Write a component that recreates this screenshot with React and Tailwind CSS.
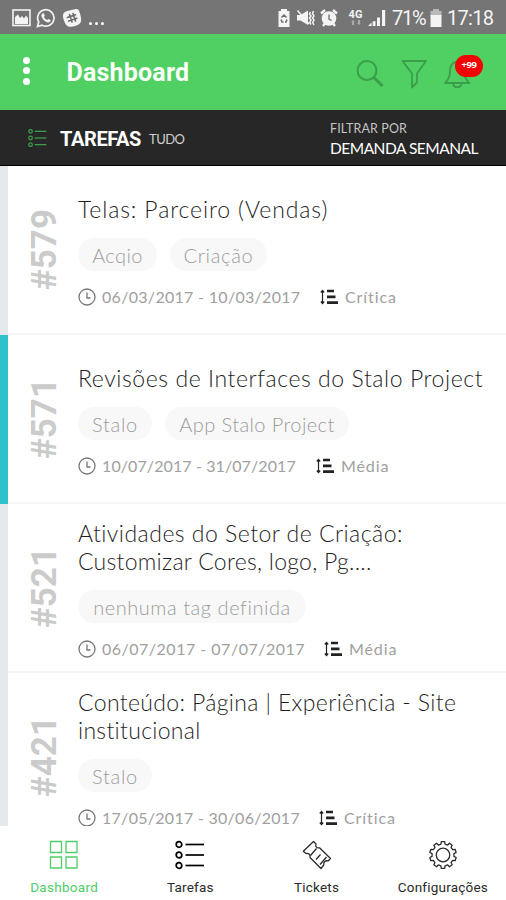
import React from "react";

const tasks = [
  {
    id: "#579",
    strip: "bg-[#e4e7eb]",
    lines: [{ text: "Telas: Parceiro (Vendas)", cls: "tracking-[0.88px]" }],
    tags: [{ text: "Acqio", cls: "w-[79px] tracking-[0.4px]" }, { text: "Criação", cls: "w-[97px] tracking-[0.7px]" }],
    date: "06/03/2017 - 10/03/2017",
    dateCls: "w-[199px] tracking-[0.3px]",
    priority: "Crítica",
  },
  {
    id: "#571",
    strip: "bg-[#2dc2cb]",
    lines: [{ text: "Revisões de Interfaces do Stalo Project", cls: "tracking-[0.57px]" }],
    tags: [{ text: "Stalo", cls: "w-[74px] tracking-[0.7px]" }, { text: "App Stalo Project", cls: "w-[184px] tracking-[0.4px]" }],
    date: "10/07/2017 - 31/07/2017",
    dateCls: "w-[195px] tracking-[0.1px]",
    priority: "Média",
  },
  {
    id: "#521",
    strip: "bg-[#e3e8ea]",
    lines: [
      { text: "Atividades do Setor de Criação:", cls: "tracking-[0.48px]" },
      { text: "Customizar Cores, logo, Pg....", cls: "tracking-[0.27px]" },
    ],
    tags: [{ text: "nenhuma tag definida", cls: "w-[228px] tracking-[0.55px]" }],
    date: "06/07/2017 - 07/07/2017",
    dateCls: "w-[203px] tracking-[0.5px]",
    priority: "Média",
  },
  {
    id: "#421",
    strip: "bg-[#e3e8ea]",
    lines: [
      { text: "Conteúdo: Página | Experiência - Site", cls: "tracking-[0.36px]" },
      { text: "institucional", cls: "tracking-[0.3px]" },
    ],
    tags: [{ text: "Stalo", cls: "w-[74px] tracking-[0.7px]" }],
    date: "17/05/2017 - 30/06/2017",
    dateCls: "w-[198px] tracking-[0.28px]",
    priority: "Crítica",
  },
];

function ListIcon({ className, stroke = 1.5 }) {
  return (
    <svg viewBox="0 0 30 28" className={className} fill="none" stroke="currentColor" strokeWidth={stroke}>
      {[3.5, 14, 24.5].map((y) => (
        <g key={y}>
          <circle cx="4" cy={y} r="2.8" />
          <path d={`M10.5 ${y}H29`} />
        </g>
      ))}
    </svg>
  );
}

function StatusBar() {
  return (
    <div className="flex h-[34px] shrink-0 items-center bg-[#757575] pl-[12px] pr-[12px] pt-px text-[#f4f4f4]">
      <svg viewBox="0 0 19 18" className="h-[18px] w-[19px]">
        <rect x="1" y="1" width="17" height="15.500" fill="none" stroke="currentColor" strokeWidth="1.600" />
        <path d="M3 15V8L6 5.500L8 9L10 7L12 9.500L14 6.500L16 9V15Z" fill="currentColor" />
      </svg>
      <svg viewBox="0 0 20 20" className="ml-[5px] h-[20px] w-[20px]" fill="none" stroke="currentColor" strokeWidth="1.700">
        <path d="M1.500 18.500L2.700 14A8.200 8.200 0 1 1 6 17.200Z" />
        <path d="M6.300 5.600L7.800 5.300L8.800 7.800L7.900 9C8.700 10.500 9.700 11.400 11.200 12.100L12.400 11L14.700 12.100C14.800 14 13 14.700 11.700 14.400C8.500 13.600 6.200 11 5.500 8.300C5.300 7.200 5.600 6.200 6.300 5.600Z" fill="currentColor" stroke="none" />
      </svg>
      <svg viewBox="0 0 20 20" className="ml-[6px] h-[20px] w-[20px]">
        <path d="M12.300 1.500C16.200 .3 17 2 18.200 6.300C19.500 11 19.800 14.500 17 16.300C14.500 17.800 9.500 19.500 6.500 18.500C3.500 17.500 2 13.500 1.200 9.800C.6 6 1.500 4.500 4.500 3.300C7 2.300 9.500 2 12.300 1.500Z" fill="currentColor" />
        <path d="M7.500 6.500L10 14M11 5.500L13.500 13M5.300 9.500L13.500 6.700M6.500 13L14.800 10.200" stroke="#6a6a6a" strokeWidth="1.600" strokeLinecap="round" />
      </svg>
      <div className="ml-[7px] flex items-center gap-[3px] pt-[12px]">
        <i className="h-[2.500px] w-[3px] rounded-full bg-white" />
        <i className="h-[2.500px] w-[3px] rounded-full bg-white" />
        <i className="h-[2.500px] w-[3px] rounded-full bg-white" />
      </div>
      <svg viewBox="0 0 14 18" className="ml-auto h-[18px] w-[14px]">
        <path d="M4 0H10V2H12.500V18H1.500V2H4Z" fill="currentColor" />
        <path d="M4.500 8.500L7 6L9.500 8.500M4 10.500L5 13H6.500M10 10.500L9 13H8" stroke="#6b6b6b" fill="none" strokeWidth="1.500" />
      </svg>
      <svg viewBox="0 0 20 18" className="ml-[5px] h-[18px] w-[20px]">
        <path d="M1 6H4.500L12 1.500V16L4.500 11.500H1Z" fill="currentColor" />
        <path d="M1.500 1.500L13 15" stroke="currentColor" strokeWidth="1.500" />
        <path d="M14.500 3L13.500 5L15 7L13.500 9L15 11L13.700 13.500L15 15.500M17.500 2L16.500 4.500L18 7L16.500 9L18 11L16.700 13.500L18 16" stroke="currentColor" strokeWidth="1.500" fill="none" />
      </svg>
      <svg viewBox="0 0 18 18" className="ml-[4px] h-[18px] w-[18px]">
        <circle cx="9" cy="9.500" r="7.300" fill="currentColor" />
        <path d="M1 4.500L5 1M17 4.500L13 1M3 17L5 14.500M15 17L13 14.500" stroke="currentColor" strokeWidth="2.400" />
        <path d="M9 5.500V10L11.500 11.500" stroke="#777" strokeWidth="1.400" fill="none" />
      </svg>
      <div className="ml-[10px] flex w-[15px] flex-col items-center pb-[2px]">
        <span className="font-[Roboto,sans-serif] text-[11px] font-bold leading-[11px]">4G</span>
        <svg viewBox="0 0 10 5" className="h-[5px] w-[10px] text-[#aaa]">
          <path d="M0 2L2 0L4 2H3V5H1V2ZM6 3H7V0H9V3H10L8 5Z" fill="currentColor" />
        </svg>
      </div>
      <svg viewBox="0 0 18 18" className="ml-[5px] h-[18px] w-[18px]" fill="currentColor">
        <path d="M0 17L3.500 13.500V17ZM4.700 12.300H7.500V17H4.700ZM9 8.500H12V17H9ZM14 1H17.200V17H14Z" />
      </svg>
      <span className="ml-[6px] w-[34px] whitespace-nowrap font-[Roboto,sans-serif] text-[20px] leading-none tracking-[-1.3px]">71%</span>
      <svg viewBox="0 0 12 18" className="ml-[4px] h-[18px] w-[12px]">
        <path d="M3 0H9V2H11.500V7H.5V2H3Z" fill="#b9b9b9" />
        <path d="M.5 6H11.500V18H.5Z" fill="currentColor" />
      </svg>
      <span className="ml-[5px] w-[47px] whitespace-nowrap font-[Roboto,sans-serif] text-[20px] leading-none tracking-[-0.7px]">17:18</span>
    </div>
  );
}

function Header() {
  return (
    <header className="flex h-[76px] shrink-0 items-center bg-[#50cf62] pl-[22px] pr-[22px]">
      <div className="flex w-[9px] flex-col items-center gap-[3.500px] pb-[3px]">
        <i className="size-[7px] rounded-full bg-white" />
        <i className="size-[7px] rounded-full bg-white" />
        <i className="size-[7px] rounded-full bg-white" />
      </div>
      <h1 className="ml-[35.500px] font-[Roboto,sans-serif] text-[25px] font-bold leading-none tracking-[0.2px] text-[#f7fff7]">Dashboard</h1>
      <div className="ml-auto flex items-center pt-[3px] text-[#3c9e4a]">
        <svg viewBox="0 0 30 30" className="-ml-px mr-px h-[30px] w-[30px]" fill="none" stroke="currentColor">
          <circle cx="12" cy="11.500" r="9.500" strokeWidth="2" />
          <path d="M18.800 18.500L27.500 27" strokeWidth="3" />
        </svg>
        <svg viewBox="0 0 28 30" className="ml-[14px] h-[30px] w-[28px]" fill="none" stroke="currentColor" strokeWidth="1.800" strokeLinejoin="round">
          <path d="M2.500 2H26L17 14.500V23.500L12 28.500V14.500Z" />
        </svg>
        <div className="relative ml-[15px] h-[30px] w-[41px]">
          <svg viewBox="0 0 28 30" className="h-[30px] w-[28px]" fill="none" stroke="currentColor" strokeWidth="1.800" strokeLinejoin="round">
            <path d="M14 2.500C9.500 3.500 7 7 7 12C7 18 5.500 21 2 24H26.500C23 21 21 18 21 12C21 7 18.500 3.500 14 2.500Z" />
            <path d="M10 24.500A4.300 4.300 0 0 0 18.500 24.500" />
          </svg>
          <span className="absolute left-[12px] top-[-4px] flex h-[22px] w-[28px] items-center justify-center rounded-full bg-[#f50005] font-['Open_Sans',sans-serif] text-[9.500px] font-bold tracking-[-0.4px] text-white">+99</span>
        </div>
      </div>
    </header>
  );
}

function FilterBar() {
  return (
    <div className="flex h-[56px] shrink-0 items-center border-b border-black bg-[#272727] pl-[28px]">
      <ListIcon className="h-[18px] w-[19px] text-[#3c9b4c]" stroke={2} />
      <div className="ml-[13px] flex w-[270px] items-center pt-[3px]">
        <span className="w-[89px] font-[Roboto,sans-serif] text-[20px] font-bold leading-none tracking-[-0.4px] text-white">TAREFAS</span>
        <span className="pt-px font-[Lato,sans-serif] text-[13px] leading-none tracking-[-0.5px] text-[#d0d0d0]">TUDO</span>
      </div>
      <div className="flex flex-col whitespace-nowrap pt-[4px] font-[Lato,sans-serif]">
        <span className="text-[12.500px] leading-[18px] tracking-[0.1px] text-[#c4c4c4]">FILTRAR POR</span>
        <span className="text-[15.500px] leading-[21px] tracking-[-0.5px] text-white">DEMANDA SEMANAL</span>
      </div>
    </div>
  );
}

function TaskRow({ task }) {
  return (
    <article className="flex h-[169px] shrink-0 border-b-2 border-[#f6f6f7]">
      <div className={`-mb-[2px] w-[8px] shrink-0 ${task.strip}`} />
      <div className="flex w-[70px] shrink-0 items-center justify-center pl-[3px]">
        <span className="rotate-180 font-[Roboto,sans-serif] text-[35px] font-bold leading-none text-[#cbcbcb] [writing-mode:vertical-rl]">{task.id}</span>
      </div>
      <div className="flex flex-col justify-center whitespace-nowrap pt-[2px] font-[Lato,sans-serif]">
        <h2 className="text-[23px] font-light leading-[28px] text-[#1f1f1f]">
          {task.lines.map((line) => (
            <span key={line.text} className={`block ${line.cls}`}>{line.text}</span>
          ))}
        </h2>
        <div className="mt-[15px] flex gap-[13px]">
          {task.tags.map((tag) => (
            <span key={tag.text} className={`flex h-[33px] items-center justify-center rounded-full bg-[#f8f8f8] pt-px text-[20px] font-light text-[#9c9c9c] ${tag.cls}`}>{tag.text}</span>
          ))}
        </div>
        <div className="mt-[17px] flex h-[18px] items-center text-[16px] leading-[18px] text-[#a0a0a0]">
          <svg viewBox="0 0 18 18" className="h-[18px] w-[18px] text-[#777]" fill="none" stroke="currentColor" strokeWidth="1.300">
            <circle cx="9" cy="9" r="8" />
            <path d="M9 4.500V10H12.500" />
          </svg>
          <span className={`ml-[6px] ${task.dateCls}`}>{task.date}</span>
          <svg viewBox="0 0 18 16" className="ml-[19px] h-[16px] w-[18px] text-[#222]">
            <path d="M2.500 2V14M.8 3.500L2.500 1.500L4.200 3.500M.8 12.500L2.500 14.500L4.200 12.500" stroke="currentColor" strokeWidth="1.200" fill="none" />
            <path d="M7 .8H14V3.300H7ZM7 6.500H15.500V9.200H7ZM7 12.300H18V15H7Z" fill="currentColor" />
          </svg>
          <span className="ml-[7px] tracking-[0.9px]">{task.priority}</span>
        </div>
      </div>
    </article>
  );
}

// Outline of the ten-toothed cog on the settings tab.
function gearPath() {
  const pts = [];
  const teeth = 10;
  for (let i = 0; i < teeth; i++) {
    [[-0.3, 11], [-0.2, 13.4], [0.2, 13.4], [0.3, 11]].forEach(([o, r]) => {
      const a = ((i + o) / teeth) * Math.PI * 2 - Math.PI / 2;
      pts.push(`${(15 + r * Math.cos(a)).toFixed(2)} ${(15 + r * Math.sin(a)).toFixed(2)}`);
    });
  }
  return `M${pts.join("L")}Z`;
}

function BottomNav() {
  return (
    <nav className="grid h-[74px] shrink-0 grid-cols-4 bg-white pl-px font-[Roboto,sans-serif] text-[13.500px] leading-[16px] text-[#2b2b2b]">
      <div className="flex flex-col items-center gap-[9px] pt-[14px] text-[#50cc68]">
        <svg viewBox="0 0 30 30" className="h-[30px] w-[30px]" fill="none" stroke="currentColor" strokeWidth="1.300">
          <path d="M1.500 1.500H12.500V12.500H1.500ZM17 1.500H28V12.500H17ZM1.500 17H12.500V28H1.500ZM17 17H28V28H17Z" />
        </svg>
        <span className="tracking-[0.3px]">Dashboard</span>
      </div>
      <div className="flex flex-col items-center gap-[9px] pt-[14px]">
        <ListIcon className="h-[30px] w-[30px] text-black" stroke={1.7} />
        <span className="tracking-[0.2px]">Tarefas</span>
      </div>
      <div className="flex flex-col items-center gap-[9px] pt-[14px]">
        <svg viewBox="0 0 30 30" className="h-[30px] w-[30px]" fill="none" stroke="currentColor" strokeWidth="1.300" strokeLinejoin="round">
          <path d="M11.500 1.500L14 4C13 6.500 15 8.500 17.500 7.800L28.500 18.500L26 21C23.500 20 21 22.500 21.800 25L19 28.500L8 17.500C8.800 15 6.500 12.800 4 13.500L1.300 11.300Z" />
          <path d="M14.500 8.500L8.500 15.500M24.500 17L18 24.500M18.500 14.500L14 19.500" />
        </svg>
        <span className="tracking-[0.2px]">Tickets</span>
      </div>
      <div className="flex flex-col items-center gap-[9px] pt-[14px]">
        <svg viewBox="0 0 30 30" className="h-[30px] w-[30px]" fill="none" stroke="currentColor" strokeWidth="1.300" strokeLinejoin="round">
          <path d={gearPath()} />
          <circle cx="15" cy="15" r="6.800" />
        </svg>
        <span className="tracking-[0.2px]">Configurações</span>
      </div>
    </nav>
  );
}

export default function App() {
  return (
    <div className="flex h-[900px] w-[506px] flex-col overflow-hidden bg-white">
      <StatusBar />
      <Header />
      <FilterBar />
      <main className="flex min-h-0 flex-1 flex-col overflow-hidden">
        {tasks.map((task) => (
          <TaskRow key={task.id} task={task} />
        ))}
      </main>
      <BottomNav />
    </div>
  );
}
